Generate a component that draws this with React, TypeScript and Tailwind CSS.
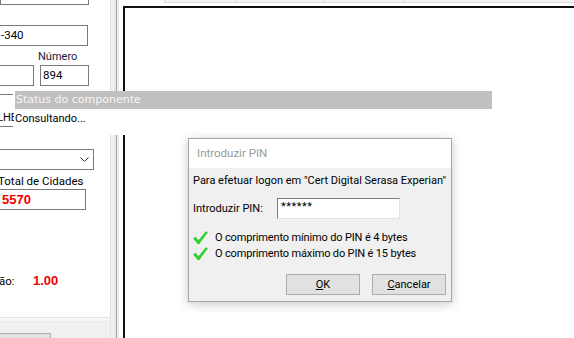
import React from 'react';

const ui = { fontFamily: 'Roboto, "Noto Sans", "Liberation Sans", sans-serif' };
const tah = { fontFamily: '"DejaVu Sans", "Liberation Sans", sans-serif' };
const bold = { fontFamily: '"Liberation Sans", Arial, sans-serif' };

function Check() {
  return (
    <svg width="15" height="14" viewBox="0 0 15 14" className="shrink-0">
      <path d="M0.5 7.5 L2.5 6 L5.5 9.5 L13 0.5 L14.5 1.5 L6 13 L5 13 Z" fill="#1ee01e" stroke="#3a9a3a" strokeWidth="0.4" />
    </svg>
  );
}

function Field({ w, children, className = '' }: { w: string; children?: React.ReactNode; className?: string }) {
  return (
    <div className={`h-[21px] border border-[#7a7a7a] bg-white flex items-center pl-[1px] text-[11.5px] text-black ${w} ${className}`}>
      {children}
    </div>
  );
}

function LeftPanel() {
  return (
    <div className="w-[110px] shrink-0 flex flex-col bg-white overflow-hidden" style={ui}>
      <div className="flex flex-col">
        <Field w="w-[89px]" className="-mt-[16px]" />
        <Field w="w-[89px]" className="mt-[20px] -ml-[1px]">
          -340
        </Field>
        <div className="text-[11px] leading-[16px] mt-[3px] ml-[38px] text-[#1a1a40]">Número</div>
        <div className="flex gap-[6px]">
          <Field w="w-[35px]" className="-ml-[1px]" />
          <Field w="w-[49px]" className="pl-[2px]">
            894
          </Field>
        </div>
        <div className="w-[13px] h-[1px] bg-[#7a7a7a] mt-[8px]" />
        <div className="mt-[16px] w-[14px] overflow-hidden">
          <div className="-ml-[3px] text-[11px] leading-[13px] whitespace-nowrap">LHE</div>
        </div>
        <div className="w-[13px] h-[1px] bg-[#7a7a7a] mt-[2px]" />
      </div>
      <div className="flex-1 flex flex-col mt-[10px]">
        <div className="flex-1 flex flex-col">
          <div className="mt-[12px] h-[21px] w-[95px] -ml-[1px] border border-[#7a7a7a] flex items-center justify-end pr-[4px]">
            <svg width="9" height="6" viewBox="0 0 9 6">
              <path d="M0.5 0.5 L4.5 4.5 L8.5 0.5" fill="none" stroke="#333" strokeWidth="1" />
            </svg>
          </div>
          <div className="text-[11.5px] leading-[16px] mt-[3px] -ml-[2px] whitespace-nowrap">Total de Cidades</div>
          <div className="h-[21px] w-[87px] -ml-[1px] border border-[#7a7a7a] flex items-center pl-[2px] text-[13px] font-bold text-[#ee0000]" style={bold}>
            5570
          </div>
          <div className="flex items-center mt-[63px] text-[11.5px] leading-[16px]">
            <span className="-ml-[1px] w-[34px]">ão:</span>
            <span className="text-[13px] font-bold text-[#ee0000]" style={bold}>1.00</span>
          </div>
        </div>
        <div className="h-[1px] bg-[#e3e3e3]" />
        <div className="h-[4px] bg-[#f7f7f7] border-b border-[#ececec]" />
        <div className="h-[16px] bg-[#f0f0f0] flex flex-col justify-end">
          <div className="w-[51px] h-[5px] bg-[#e1e1e1] border-t border-r border-[#adadad]" />
        </div>
      </div>
    </div>
  );
}

function Splitter() {
  return (
    <div className="w-[13px] shrink-0 flex bg-white">
      <div className="w-[1px] bg-[#e3e3e3]" />
      <div className="w-[2px] bg-[#f0f0f0]" />
      <div className="w-[1px] bg-[#f8f8f8]" />
      <div className="w-[2px] bg-[#e6e6e6]" />
      <div className="w-[1px] bg-[#a9a9a9]" />
      <div className="w-[2px] bg-[#ececec]" />
      <div className="w-[4px] bg-white" />
    </div>
  );
}

function RightArea() {
  return (
    <div className="flex-1 flex flex-col bg-white">
      <div className="h-[6px] flex">
        <div className="w-[41px]" />
        <div className="h-[3px] w-[73px] bg-[#f3f3f3] border-b border-r border-l border-[#dcdcdc]" />
        <div className="h-[3px] w-[88px] bg-[#f3f3f3] border-b border-r border-[#dcdcdc]" />
        <div className="h-[3px] w-[80px] bg-[#f3f3f3] border-b border-r border-[#dcdcdc]" />
        <div className="h-[3px] flex-1 bg-[#f3f3f3] border-b border-[#dcdcdc]" />
      </div>
      <div className="flex-1 border-l-2 border-t-2 border-[#101010] bg-white" />
    </div>
  );
}

function StatusWindow() {
  return (
    <div className="absolute left-[15px] top-[91px] w-[477px] h-[44px] bg-white flex flex-col">
      <div className="h-[18px] bg-[#c0c0c0] text-[#f6f6f6] text-[11px] leading-[18px] pl-[1px] whitespace-nowrap" style={tah}>
        Status do componente
      </div>
      <div className="text-[11px] leading-[14px] mt-[3px] text-black whitespace-nowrap" style={ui}>
        Consultando...
      </div>
    </div>
  );
}

function PinDialog() {
  return (
    <div
      className="absolute left-[188px] top-[138px] w-[264px] h-[164px] border border-[#a5a5a5] bg-[#f0f0f0] flex flex-col shadow-[0_2px_10px_rgba(0,0,0,0.22)] text-[11px] text-black"
      style={ui}
    >
      <div className="h-[29px] bg-white flex items-center pl-[8px] text-[11.5px] text-[#9a9a9a]">Introduzir PIN</div>
      <div className="flex-1 flex flex-col pl-[4px] pr-[5px]">
        <div className="mt-[5px] leading-[16px] whitespace-nowrap">Para efetuar logon em "Cert Digital Serasa Experian"</div>
        <div className="flex items-center mt-[9px]">
          <span className="w-[84px] leading-[16px]">Introduzir PIN:</span>
          <div className="w-[123px] h-[21px] border border-t-[#7a7a7a] border-l-[#7a7a7a] border-r-[#e3e3e3] border-b-[#e3e3e3] bg-white pl-[3px] text-[11px] leading-[12px] pt-[2px] tracking-[0.5px]">
            ******
          </div>
        </div>
        <div className="flex flex-col mt-[11px] tracking-[-0.15px]">
          <div className="flex items-center gap-[7px] h-[16px]">
            <Check />
            <span className="whitespace-nowrap">O comprimento mínimo do PIN é 4 bytes</span>
          </div>
          <div className="flex items-center gap-[7px] h-[16px]">
            <Check />
            <span className="whitespace-nowrap">O comprimento máximo do PIN é 15 bytes</span>
          </div>
        </div>
        <div className="flex justify-end gap-[12px] mt-[12px]">
          <button className="w-[74px] h-[21px] bg-[#e1e1e1] border border-[#adadad] leading-[16px]">
            <span className="underline">O</span>K
          </button>
          <button className="w-[74px] h-[21px] bg-[#e1e1e1] border border-[#adadad] leading-[16px]">
            <span className="underline">C</span>ancelar
          </button>
        </div>
      </div>
    </div>
  );
}

export default function App() {
  return (
    <div className="relative w-[574px] h-[338px] overflow-hidden bg-white">
      <div className="flex h-full">
        <LeftPanel />
        <Splitter />
        <RightArea />
      </div>
      <StatusWindow />
      <PinDialog />
    </div>
  );
}
